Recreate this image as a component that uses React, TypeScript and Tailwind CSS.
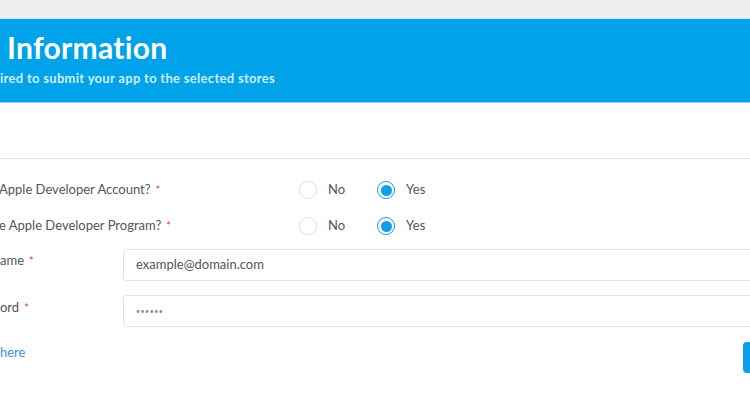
import React from "react";

function Radio({ checked, label }: { checked?: boolean; label: string }) {
  return (
    <div className="flex items-center">
      {checked ? (
        <div className="w-[18px] h-[18px] rounded-full border-[1.5px] border-[#1b9be2] flex items-center justify-center bg-white">
          <div className="w-[11px] h-[11px] rounded-full bg-[#0aa0e8]" />
        </div>
      ) : (
        <div className="w-[18px] h-[18px] rounded-full border-[1.5px] border-[#dedede] bg-white" />
      )}
      <span className="ml-[11px] text-[13px] text-[#555]">{label}</span>
    </div>
  );
}

function Star() {
  return <span className="ml-[5px] text-[#e8344a] text-[11px]">*</span>;
}

export default function App() {
  return (
    <div
      className="w-[750px] h-[415px] overflow-hidden bg-white"
      style={{ fontFamily: "Lato, 'Noto Sans', sans-serif" }}
    >
      <div className="h-[19px] bg-[#eeefef] border-b border-[#c6e9fa]" />
      <div className="h-[84px] bg-[#00a3e9] border-b border-[#8fd3f5] pt-[11px] pl-[7px]">
        <div className="text-[30px] leading-[35px] tracking-[0.3px] font-bold text-white">Information</div>
        <div className="mt-[5px] -ml-[7px] text-[13px] leading-[16px] tracking-[0.3px] font-bold text-[#cdeefc]">
          ired to submit your app to the selected stores
        </div>
      </div>
      <div className="h-[55px]" />
      <div className="border-t border-[#e4e4e4] pt-[13px]">
        <div className="flex h-[36px] items-center">
          <div className="w-[300px] shrink-0 text-[13px] text-[#555] -ml-[1px]">
            Apple Developer Account?<Star />
          </div>
          <div className="flex gap-[32px]">
            <Radio label="No" />
            <Radio checked label="Yes" />
          </div>
        </div>
        <div className="flex h-[36px] items-center">
          <div className="w-[300px] shrink-0 text-[13px] text-[#555] -ml-[1px]">
            e Apple Developer Program?<Star />
          </div>
          <div className="flex gap-[32px]">
            <Radio label="No" />
            <Radio checked label="Yes" />
          </div>
        </div>
        <div className="flex items-start">
          <div className="w-[123px] shrink-0 mt-[8px] text-[13px] leading-[16px] text-[#555]">
            ame<Star />
          </div>
          <div className="shrink-0 mt-[5px] w-[700px] h-[32px] border border-[#e4e4e4] rounded-[3px] flex items-center pl-[12px] text-[13px] text-[#555]">
            example@domain.com
          </div>
        </div>
        <div className="flex items-start mt-[14px]">
          <div className="w-[123px] shrink-0 mt-[4px] text-[13px] leading-[16px] text-[#555]">
            ord<Star />
          </div>
          <div className="shrink-0 w-[700px] h-[32px] border border-[#e4e4e4] rounded-[3px] flex items-center pl-[12px] text-[7px] tracking-[0.5px] text-[#888]">
            ••••••
          </div>
        </div>
        <div className="flex items-start">
          <div className="w-[743px] shrink-0 mt-[17px] text-[13px] leading-[16px] text-[#3a8fd8]">here</div>
          <div className="shrink-0 mt-[15px] w-[60px] h-[31px] rounded-[4px] bg-[#0aa0e8]" />
        </div>
      </div>
    </div>
  );
}
